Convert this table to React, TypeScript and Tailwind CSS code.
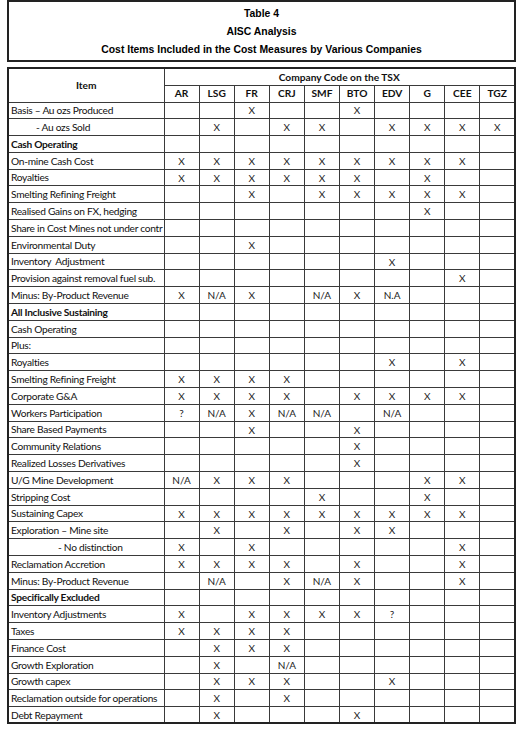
const companies = ['AR', 'LSG', 'FR', 'CRJ', 'SMF', 'BTO', 'EDV', 'G', 'CEE', 'TGZ']

type Row = {
  label: string
  bold?: boolean
  indent?: number
  marks?: Record<string, string>
}

const all = (codes: string[], v = 'X') =>
  Object.fromEntries(codes.map((c) => [c, v]))

const rows: Row[] = [
  { label: 'Basis – Au ozs Produced', marks: all(['FR', 'BTO']) },
  { label: '- Au ozs Sold', indent: 1, marks: all(['LSG', 'CRJ', 'SMF', 'EDV', 'G', 'CEE', 'TGZ']) },
  { label: 'Cash Operating', bold: true },
  { label: 'On-mine Cash Cost', marks: all(['AR', 'LSG', 'FR', 'CRJ', 'SMF', 'BTO', 'EDV', 'G', 'CEE']) },
  { label: 'Royalties', marks: all(['AR', 'LSG', 'FR', 'CRJ', 'SMF', 'BTO', 'G']) },
  { label: 'Smelting Refining Freight', marks: all(['FR', 'SMF', 'BTO', 'EDV', 'G', 'CEE']) },
  { label: 'Realised Gains on FX, hedging', marks: all(['G']) },
  { label: 'Share in Cost Mines not under contr' },
  { label: 'Environmental Duty', marks: all(['FR']) },
  { label: 'Inventory  Adjustment', marks: all(['EDV']) },
  { label: 'Provision against removal fuel sub.', marks: all(['CEE']) },
  { label: 'Minus: By-Product Revenue', marks: { AR: 'X', LSG: 'N/A', FR: 'X', SMF: 'N/A', BTO: 'X', EDV: 'N.A' } },
  { label: 'All Inclusive Sustaining', bold: true },
  { label: 'Cash Operating' },
  { label: 'Plus:' },
  { label: 'Royalties', marks: all(['EDV', 'CEE']) },
  { label: 'Smelting Refining Freight', marks: all(['AR', 'LSG', 'FR', 'CRJ']) },
  { label: 'Corporate G&A', marks: all(['AR', 'LSG', 'FR', 'CRJ', 'BTO', 'EDV', 'G', 'CEE']) },
  { label: 'Workers Participation', marks: { AR: '?', LSG: 'N/A', FR: 'X', CRJ: 'N/A', SMF: 'N/A', EDV: 'N/A' } },
  { label: 'Share Based Payments', marks: all(['FR', 'BTO']) },
  { label: 'Community Relations', marks: all(['BTO']) },
  { label: 'Realized Losses Derivatives', marks: all(['BTO']) },
  { label: 'U/G Mine Development', marks: { AR: 'N/A', LSG: 'X', FR: 'X', CRJ: 'X', G: 'X', CEE: 'X' } },
  { label: 'Stripping Cost', marks: all(['SMF', 'G']) },
  { label: 'Sustaining Capex', marks: all(['AR', 'LSG', 'FR', 'CRJ', 'SMF', 'BTO', 'EDV', 'G', 'CEE']) },
  { label: 'Exploration – Mine site', marks: all(['LSG', 'CRJ', 'BTO', 'EDV']) },
  { label: '- No distinction', indent: 2, marks: all(['AR', 'FR', 'CEE']) },
  { label: 'Reclamation Accretion', marks: all(['AR', 'LSG', 'FR', 'CRJ', 'BTO', 'CEE']) },
  { label: 'Minus: By-Product Revenue', marks: { LSG: 'N/A', CRJ: 'X', SMF: 'N/A', BTO: 'X', CEE: 'X' } },
  { label: 'Specifically Excluded', bold: true },
  { label: 'Inventory Adjustments', marks: { AR: 'X', FR: 'X', CRJ: 'X', SMF: 'X', BTO: 'X', EDV: '?' } },
  { label: 'Taxes', marks: all(['AR', 'LSG', 'FR', 'CRJ']) },
  { label: 'Finance Cost', marks: all(['LSG', 'FR', 'CRJ']) },
  { label: 'Growth Exploration', marks: { LSG: 'X', CRJ: 'N/A' } },
  { label: 'Growth capex', marks: all(['LSG', 'FR', 'CRJ', 'EDV']) },
  { label: 'Reclamation outside for operations', marks: all(['LSG', 'CRJ']) },
  { label: 'Debt Repayment', marks: all(['LSG', 'BTO']) },
]

const cell = 'border-[1.5px] border-[#3a3a3a] p-0'

export default function App() {
  return (
    <div className="bg-white w-[517px] h-[730px] overflow-hidden pl-[7px] pr-[1px] text-[#111]">
      <div className="border-2 border-[#222] h-[62px] flex flex-col items-center justify-center gap-[5px] font-['Liberation_Sans',Arial,sans-serif] font-bold text-[10.4px] leading-[13px] text-black">
        <div>Table 4</div>
        <div>AISC Analysis</div>
        <div>Cost Items Included in the Cost Measures by Various Companies</div>
      </div>

      <table className="mt-[5px] w-[509px] table-fixed border-collapse border-2 border-[#222] font-['Lato',sans-serif] text-[10.2px] [font-variant-ligatures:none]">
        <colgroup>
          <col className="w-[156px]" />
          {companies.map((c) => (
            <col key={c} />
          ))}
        </colgroup>
        <thead>
          <tr className="h-[17px]">
            <th rowSpan={2} className={`${cell} font-bold text-center`}>
              Item
            </th>
            <th colSpan={10} className={`${cell} font-bold text-center leading-none`}>
              Company Code on the TSX
            </th>
          </tr>
          <tr className="h-[17px]">
            {companies.map((c) => (
              <th key={c} className={`${cell} font-bold text-center leading-none`}>
                {c}
              </th>
            ))}
          </tr>
        </thead>
        <tbody>
          {rows.map((r, i) => (
            <tr key={i} className="h-[16.8px]">
              <td
                className={`${cell} leading-none whitespace-pre overflow-hidden tracking-[-0.28px] ${r.bold ? 'font-bold' : ''} ${
                  r.indent === 1 ? 'pl-[27px]' : r.indent === 2 ? 'pl-[49px]' : 'pl-[2px]'
                }`}
              >
                {r.label}
              </td>
              {companies.map((c) => (
                <td key={c} className={`${cell} text-center leading-none text-[10px] text-[#222]`}>
                  {r.marks?.[c] ?? ''}
                </td>
              ))}
            </tr>
          ))}
        </tbody>
      </table>
    </div>
  )
}
